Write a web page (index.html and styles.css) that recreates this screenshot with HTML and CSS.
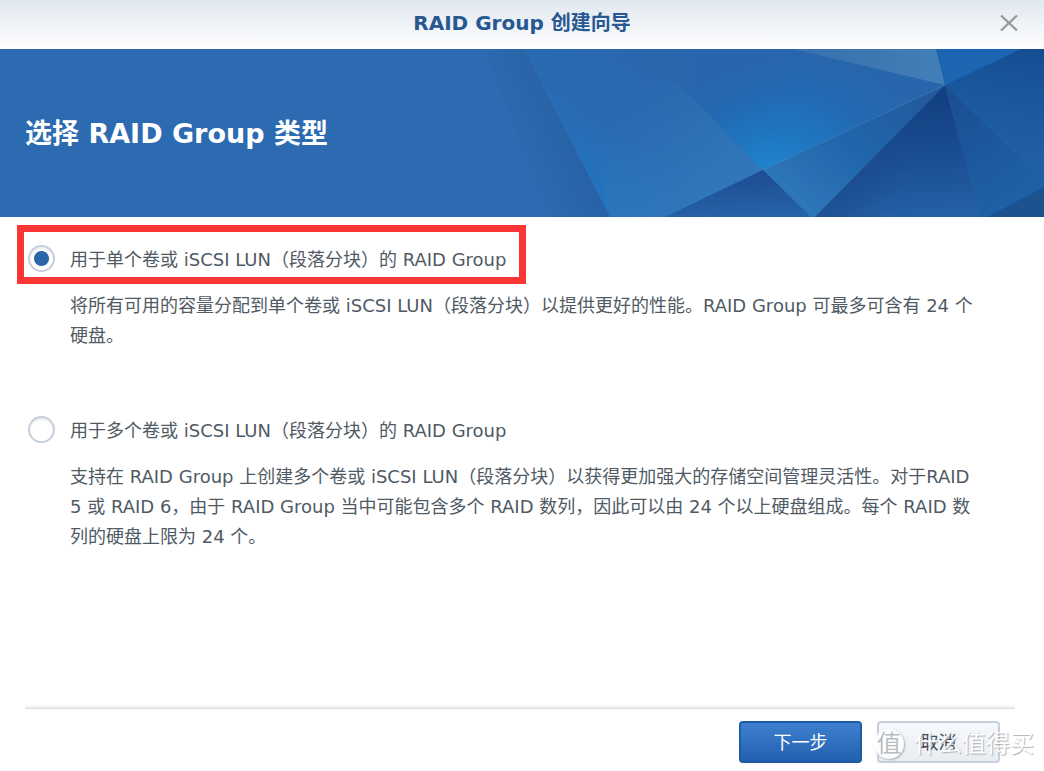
FILE: index.html
```html
<!DOCTYPE html>
<html lang="zh-CN">
<head>
<meta charset="utf-8">
<title>RAID Group 创建向导</title>
<link rel="stylesheet" href="styles.css">
</head>
<body>
<main class="wizard">
  <header class="titlebar">
    <h1 class="titlebar-text">RAID Group 创建向导</h1>
    <button class="close" type="button" aria-label="关闭">
      <svg width="18" height="16" viewBox="0 0 18 16"><path d="M1 .5 17 15.5M17 .5 1 15.5" fill="none" stroke="#92979c" stroke-width="2.2"/></svg>
    </button>
  </header>
  <section class="banner">
    <svg class="banner-art" viewBox="0 0 564 168" preserveAspectRatio="none" aria-hidden="true">
      <defs>
        <linearGradient id="edge" gradientUnits="userSpaceOnUse" x1="35" y1="110" x2="97" y2="84"><stop offset="0" stop-color="#2c6bb2"/><stop offset="1" stop-color="#2861a5"/></linearGradient>
        <linearGradient id="left" gradientUnits="userSpaceOnUse" x1="240" y1="10" x2="130" y2="168"><stop offset="0" stop-color="#2966ab"/><stop offset=".6" stop-color="#296ab1"/><stop offset="1" stop-color="#2275c0"/></linearGradient>
        <linearGradient id="leftlow" gradientUnits="userSpaceOnUse" x1="150" y1="60" x2="230" y2="150"><stop offset="0" stop-color="#3077b9" stop-opacity="0"/><stop offset="1" stop-color="#3077b9"/></linearGradient>
        <radialGradient id="mid" gradientUnits="userSpaceOnUse" cx="285" cy="125" r="150" gradientTransform="rotate(-27 285 125) translate(0 37.5) scale(1 .7)"><stop offset="0" stop-color="#1f86ce"/><stop offset=".4" stop-color="#2074bf"/><stop offset=".75" stop-color="#2268b1"/><stop offset="1" stop-color="#2766ac"/></radialGradient>
        <linearGradient id="midfade" gradientUnits="userSpaceOnUse" x1="165" y1="30" x2="215" y2="20"><stop offset="0" stop-color="#2967ac"/><stop offset="1" stop-color="#2967ac" stop-opacity="0"/></linearGradient>
        <linearGradient id="pale" x1="0" y1="0" x2="1" y2="0"><stop offset="0" stop-color="#376fac"/><stop offset="1" stop-color="#437fb8"/></linearGradient>
        <linearGradient id="center" gradientUnits="userSpaceOnUse" x1="440" y1="50" x2="340" y2="168"><stop offset="0" stop-color="#235b9d"/><stop offset=".5" stop-color="#2065aa"/><stop offset="1" stop-color="#2d76b8"/></linearGradient>
        <linearGradient id="low" x1=".4" y1="0" x2=".6" y2="1"><stop offset="0" stop-color="#1d4a90"/><stop offset="1" stop-color="#2763a7"/></linearGradient>
        <linearGradient id="dark" gradientUnits="userSpaceOnUse" x1="455" y1="40" x2="460" y2="168"><stop offset="0" stop-color="#113d80"/><stop offset=".5" stop-color="#1a4d91"/><stop offset="1" stop-color="#2561a5"/></linearGradient>
        <linearGradient id="darkside" gradientUnits="userSpaceOnUse" x1="360" y1="110" x2="420" y2="145"><stop offset="0" stop-color="#194786" stop-opacity=".7"/><stop offset="1" stop-color="#194786" stop-opacity="0"/></linearGradient>
        <linearGradient id="slice" gradientUnits="userSpaceOnUse" x1="470" y1="50" x2="540" y2="160"><stop offset="0" stop-color="#1b4f92"/><stop offset="1" stop-color="#1e62a7"/></linearGradient>
        <linearGradient id="right" gradientUnits="userSpaceOnUse" x1="550" y1="0" x2="530" y2="110"><stop offset="0" stop-color="#164d92"/><stop offset=".6" stop-color="#1b5a9f"/><stop offset="1" stop-color="#205fa3"/></linearGradient>
      </defs>
      <path fill="#2c6bb2" d="M0 0H564V168H0z"/>
      <path fill="url(#edge)" d="M5 0H44L130 168H65z"/>
      <path fill="url(#left)" d="M44 0H313L465 36 283 121 185 168H130z"/>
      <path fill="url(#leftlow)" d="M90 0H165L283 121 185 168H130z"/>
      <path fill="url(#mid)" d="M165 0H313L465 36 283 121z"/>
      <path fill="url(#midfade)" d="M160 0H235L230 67z"/>
      <path fill="url(#pale)" d="M313 0H456L465 36z"/>
      <path fill="#1c65b0" d="M456 0H541L465 36z"/>
      <path fill="url(#center)" d="M465 36 283 121 331 168H335z"/>
      <path fill="url(#low)" d="M283 121 185 168H331z"/>
      <path fill="url(#dark)" d="M465 36 335 168H501z"/>
      <path fill="url(#darkside)" d="M465 36 335 168H501z"/>
      <path fill="url(#slice)" d="M465 36 564 131V168H501z"/>
      <path fill="url(#right)" d="M465 36 541 0H564V131z"/>
      <path fill="#1c528f" d="M564 138 507 168H564z"/>
      <path d="M283 121 465 36" stroke="#4792c9" stroke-opacity=".4"/>
    </svg>
    <h2 class="banner-title">选择 RAID Group 类型</h2>
  </section>
  <form class="content">
    <div class="option">
      <span class="highlight" aria-hidden="true"></span>
      <input class="radio" type="radio" name="raid-type" id="single" checked>
      <label class="option-label" for="single">用于单个卷或 iSCSI LUN（段落分块）的 RAID Group</label>
      <p class="description">将所有可用的容量分配到单个卷或 iSCSI LUN（段落分块）以提供更好的性能。RAID Group 可最多可含有 24 个<br>硬盘。</p>
    </div>
    <div class="option">
      <input class="radio" type="radio" name="raid-type" id="multiple">
      <label class="option-label" for="multiple">用于多个卷或 iSCSI LUN（段落分块）的 RAID Group</label>
      <p class="description">支持在 RAID Group 上创建多个卷或 iSCSI LUN（段落分块）以获得更加强大的存储空间管理灵活性。对于RAID<br>5 或 RAID 6，由于 RAID Group 当中可能包含多个 RAID 数列，因此可以由 24 个以上硬盘组成。每个 RAID 数<br>列的硬盘上限为 24 个。</p>
    </div>
  </form>
  <footer class="footer">
    <button class="button primary" type="button">下一步</button>
    <button class="button" type="button">取消</button>
    <div class="watermark"><span class="watermark-logo">值</span><span>什么值得买</span></div>
  </footer>
</main>
</body>
</html>
```

FILE: styles.css
```css
* { box-sizing: border-box; }

body {
  margin: 0;
  background: #fff;
  color: #505a64;
  font-family: Verdana, "DejaVu Sans", "Noto Sans CJK SC", sans-serif;
  font-size: 18px;
  line-height: 30px;
}

.wizard {
  display: flex;
  flex-direction: column;
  min-height: 100vh;
}

.titlebar {
  display: grid;
  grid-template-columns: 1fr auto 1fr;
  align-items: center;
  height: 49px;
  padding: 0 26px 3px;
  background: linear-gradient(#e0e7ef, #fff);
}

.titlebar-text {
  grid-column: 2;
  margin: 0;
  color: #285891;
  font-size: 20px;
  line-height: 46px;
}

.close {
  display: flex;
  justify-self: end;
  padding: 0;
  border: 0;
  background: none;
}

.banner {
  position: relative;
  display: flex;
  align-items: center;
  height: 168px;
  padding: 2px 25px 0;
  background: #2c6bb2;
}

.banner-art {
  position: absolute;
  top: 0;
  right: 0;
  width: 564px;
  height: 100%;
}

.banner-title {
  position: relative;
  margin: 0;
  color: #fff;
  font-size: 27px;
  line-height: 40px;
}

.content {
  display: flex;
  flex: 1;
  flex-direction: column;
  gap: 64px;
  padding: 27px 28px;
}

.option {
  position: relative;
  display: grid;
  grid-template-columns: 27px 1fr;
  column-gap: 15px;
  row-gap: 15px;
  align-items: start;
}

.radio {
  appearance: none;
  width: 27px;
  height: 27px;
  margin: 1px 0 0;
  border: 2px solid #c6cedb;
  border-radius: 50%;
  background: #fff;
  box-shadow: inset 0 2px 2px #eceef1;
}

.radio:checked {
  background: radial-gradient(circle, #2b66aa 7px, #fff 8px);
}

.option-label {
  line-height: 32px;
  white-space: nowrap;
}

.description {
  grid-column: 2;
  margin: 0;
  white-space: nowrap;
}

.highlight {
  position: absolute;
  top: -19px;
  left: -11px;
  width: 509px;
  height: 59px;
  border: 7px solid #fc3535;
}

.footer {
  position: relative;
  display: flex;
  justify-content: flex-end;
  gap: 15px;
  margin: 0 29px 0 25px;
  padding: 17px 15px 8px;
  background: linear-gradient(#fff, #f2f2f2 3px, #d8d8d8 5px, #fff 5px);
}

.button {
  width: 123px;
  height: 42px;
  padding: 2px 0 0;
  border: 2px solid #c5cfdd;
  border-radius: 4px;
  background: linear-gradient(#f5f9fe, #e8edf2);
  color: #414b55;
  font: inherit;
}

.button.primary {
  border-color: #1f5ba7;
  background: linear-gradient(#3d7fce, #2261b0);
  color: #fff;
}

.watermark {
  position: absolute;
  right: -19px;
  bottom: 11px;
  display: flex;
  align-items: center;
  gap: 10px;
  color: #fff;
  font-size: 24px;
  line-height: 32px;
  text-shadow: 1px 1px 1px #a5a9ad;
  opacity: 0.9;
  pointer-events: none;
}

.watermark-logo {
  width: 30px;
  height: 30px;
  border-radius: 50%;
  background: #fff;
  box-shadow: 1px 1px 2px #a5a9ad;
  color: #b3b7bb;
  font-size: 24px;
  line-height: 30px;
  text-align: center;
  text-shadow: none;
}
```
